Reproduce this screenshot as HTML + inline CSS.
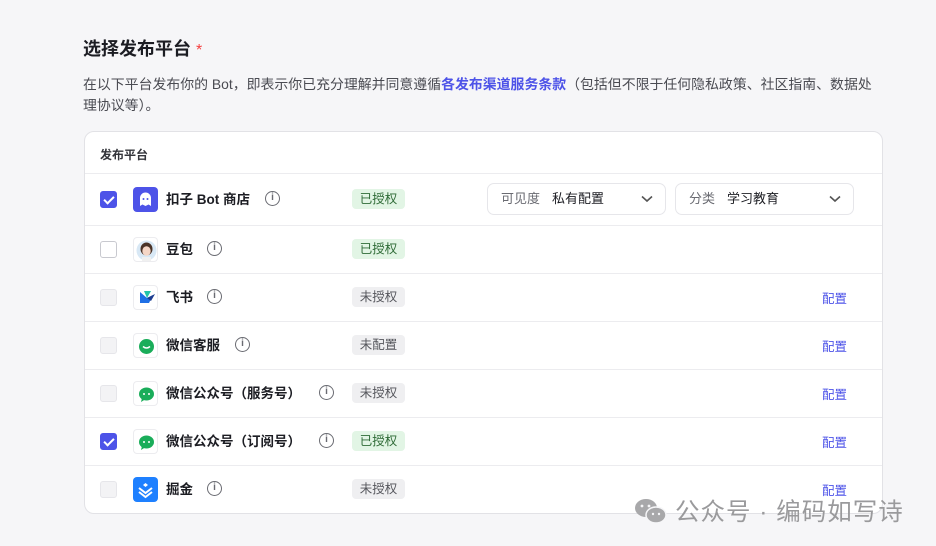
<!DOCTYPE html>
<html><head><meta charset="utf-8"><style>
*{box-sizing:border-box;margin:0;padding:0}
body{width:936px;height:546px;background:#f6f6f8;font-family:"Liberation Sans","Noto Sans CJK SC",sans-serif;position:relative;overflow:hidden;color:#1c1d23}
.abs{position:absolute}
h1{position:absolute;left:83px;top:35px;font-size:18px;font-weight:700;color:#1c1d23}
h1 span{color:#f53f3f;font-weight:400;font-size:16px}
.desc{position:absolute;left:83px;top:74px;width:800px;font-size:13.9px;line-height:21px;color:#4a4b52}
.desc b{color:#4d53e8;font-weight:700}
.card{position:absolute;left:84px;top:131px;width:799px;height:383px;background:#fff;border:1px solid #e2e2e6;border-radius:10px;overflow:hidden}
.hdr{position:absolute;left:15px;top:14px;font-size:12px;font-weight:700;color:#33343a}
.line{position:absolute;left:0;right:0;height:1px;background:#ececef}
.cb{position:absolute;left:15px;width:17px;height:17px;border-radius:3px;border:1px solid #c8c9cf;background:#fff}
.cb.dis{background:#f3f3f5;border-color:#e6e6ea}
.cb.on{background:#4d53e8;border-color:#4d53e8}
.cb.on:after{content:"";position:absolute;left:5px;top:2px;width:4px;height:8px;border:solid #fff;border-width:0 2px 2px 0;transform:rotate(45deg)}
.ic{position:absolute;left:48px;width:25px;height:25px;border-radius:4px;border:1px solid #ececef;background:#fff;overflow:hidden}
.nm{position:absolute;left:81px;font-size:13.5px;font-weight:700;color:#1c1d23;white-space:nowrap}
.info{position:absolute;width:15px;height:15px;border:1.3px solid #6a6b72;border-radius:50%;font-size:10px;line-height:12px;text-align:center;color:#6a6b72;font-weight:700}
.tag{position:absolute;left:267px;width:53px;height:20px;border-radius:4px;font-size:12.5px;line-height:20px;text-align:center}
.g{background:#e2f5e5;color:#2f6b37}
.n{background:#efeff1;color:#55565c}
.cfg{position:absolute;left:737px;font-size:12.5px;color:#4d53e8}
.dd{position:absolute;top:51px;height:32px;width:179px;border:1px solid #e6e6ea;border-radius:7px;font-size:13px;line-height:30px;padding-left:13px;color:#1c1d23}
.dd i{font-style:normal;color:#6a6b72;margin-right:12px}
.dd svg{position:absolute;right:12px;top:11px}
.wm{position:absolute;top:493px;font-size:24.5px;letter-spacing:1px;color:#9a9a9c;white-space:nowrap}
</style></head><body>
<h1>选择发布平台 <span>*</span></h1>
<div class="desc">在以下平台发布你的 Bot，即表示你已充分理解并同意遵循<b>各发布渠道服务条款</b>（包括但不限于任何隐私政策、社区指南、数据处理协议等）。</div>
<div class="card">
<div class="hdr">发布平台</div>
<div class="line" style="top:41px"></div>
<div class="line" style="top:93px"></div>
<div class="line" style="top:141px"></div>
<div class="line" style="top:189px"></div>
<div class="line" style="top:237px"></div>
<div class="line" style="top:285px"></div>
<div class="line" style="top:333px"></div>

<div class="cb on" style="top:59px"></div>
<div class="ic" style="top:55px;background:#4d53e8;border:none"><svg width="25" height="25"><path d="M7 19 L7 11 A5.5 5.5 0 0 1 18 11 L18 19 L15.5 17.5 L12.5 19 L9.5 17.5 Z" fill="#fff"/><circle cx="10.5" cy="12" r="1" fill="#4d53e8"/><circle cx="14.5" cy="12" r="1" fill="#4d53e8"/></svg></div>
<div class="nm" style="top:56px">扣子 Bot 商店</div>
<div class="info" style="left:180px;top:59px">i</div>
<div class="tag g" style="top:57px">已授权</div>
<div class="dd" style="left:402px"><i>可见度</i>私有配置<svg width="12" height="8"><path d="M1 1.5 L6 6 L11 1.5" stroke="#555" stroke-width="1.6" fill="none"/></svg></div>
<div class="dd" style="left:590px"><i>分类</i>学习教育<svg width="12" height="8"><path d="M1 1.5 L6 6 L11 1.5" stroke="#555" stroke-width="1.6" fill="none"/></svg></div>

<div class="cb" style="top:109px"></div>
<div class="ic" style="top:105px"><svg width="25" height="25"><circle cx="12.5" cy="12.5" r="10" fill="#d8e8f5"/><ellipse cx="12.5" cy="11" rx="6" ry="6.5" fill="#4a3328"/><ellipse cx="12.5" cy="13" rx="4.2" ry="4.8" fill="#f5d6c6"/><rect x="8" y="19" width="9" height="4" fill="#f0f0f0"/></svg></div>
<div class="nm" style="top:106px">豆包</div>
<div class="info" style="left:122px;top:109px">i</div>
<div class="tag g" style="top:107px">已授权</div>

<div class="cb dis" style="top:157px"></div>
<div class="ic" style="top:153px"><svg width="25" height="25"><path d="M6 6 L13 12 L19 9 L15 17 L6 17 Z" fill="#1f6fe5"/><path d="M10 5 L17 5 L13 12 Z" fill="#23c4a9"/><path d="M13 12 L21 8 L17 15 Z" fill="#1d3d8f"/></svg></div>
<div class="nm" style="top:154px">飞书</div>
<div class="info" style="left:122px;top:157px">i</div>
<div class="tag n" style="top:155px">未授权</div>
<div class="cfg" style="top:156px">配置</div>

<div class="cb dis" style="top:205px"></div>
<div class="ic" style="top:201px"><svg width="25" height="25"><circle cx="12.5" cy="12.5" r="7.5" fill="#1aad5a"/><path d="M9 12.5 Q12.5 15.5 16 12.5" stroke="#fff" stroke-width="1.5" fill="none"/></svg></div>
<div class="nm" style="top:202px">微信客服</div>
<div class="info" style="left:150px;top:205px">i</div>
<div class="tag n" style="top:203px">未配置</div>
<div class="cfg" style="top:204px">配置</div>

<div class="cb dis" style="top:253px"></div>
<div class="ic" style="top:249px"><svg width="25" height="25"><ellipse cx="12.5" cy="12" rx="7.5" ry="6.5" fill="#1aad5a"/><path d="M8 16 L7 20 L11 17.5 Z" fill="#1aad5a"/><circle cx="10" cy="12" r="1" fill="#fff"/><circle cx="15" cy="12" r="1" fill="#fff"/></svg></div>
<div class="nm" style="top:250px">微信公众号（服务号）</div>
<div class="info" style="left:234px;top:253px">i</div>
<div class="tag n" style="top:251px">未授权</div>
<div class="cfg" style="top:252px">配置</div>

<div class="cb on" style="top:301px"></div>
<div class="ic" style="top:297px"><svg width="25" height="25"><ellipse cx="12.5" cy="12" rx="7.5" ry="6.5" fill="#1aad5a"/><path d="M8 16 L7 20 L11 17.5 Z" fill="#1aad5a"/><circle cx="10" cy="12" r="1" fill="#fff"/><circle cx="15" cy="12" r="1" fill="#fff"/></svg></div>
<div class="nm" style="top:298px">微信公众号（订阅号）</div>
<div class="info" style="left:234px;top:301px">i</div>
<div class="tag g" style="top:299px">已授权</div>
<div class="cfg" style="top:300px">配置</div>

<div class="cb dis" style="top:349px"></div>
<div class="ic" style="top:345px;background:#1e80ff;border:none"><svg width="25" height="25"><path d="M12.5 6 L15 8 L12.5 10 L10 8 Z" fill="#fff"/><path d="M6 11 L12.5 16 L19 11" stroke="#fff" stroke-width="2" fill="none"/><path d="M6 15 L12.5 20 L19 15" stroke="#fff" stroke-width="2" fill="none"/></svg></div>
<div class="nm" style="top:346px">掘金</div>
<div class="info" style="left:122px;top:349px">i</div>
<div class="tag n" style="top:347px">未授权</div>
<div class="cfg" style="top:348px">配置</div>
</div>
<div class="abs" style="left:633px;top:497px"><svg width="36" height="28"><ellipse cx="13" cy="11" rx="11" ry="9" fill="#a8a8aa"/><ellipse cx="23" cy="18" rx="10" ry="8" fill="#a8a8aa" stroke="#f6f6f8" stroke-width="1.5"/><circle cx="9" cy="9" r="1.4" fill="#f6f6f8"/><circle cx="16" cy="9" r="1.4" fill="#f6f6f8"/><circle cx="20" cy="17" r="1.2" fill="#f6f6f8"/><circle cx="26" cy="17" r="1.2" fill="#f6f6f8"/></svg></div>
<div class="wm" style="left:675px">公众号 · 编码如写诗</div>
</body></html>
